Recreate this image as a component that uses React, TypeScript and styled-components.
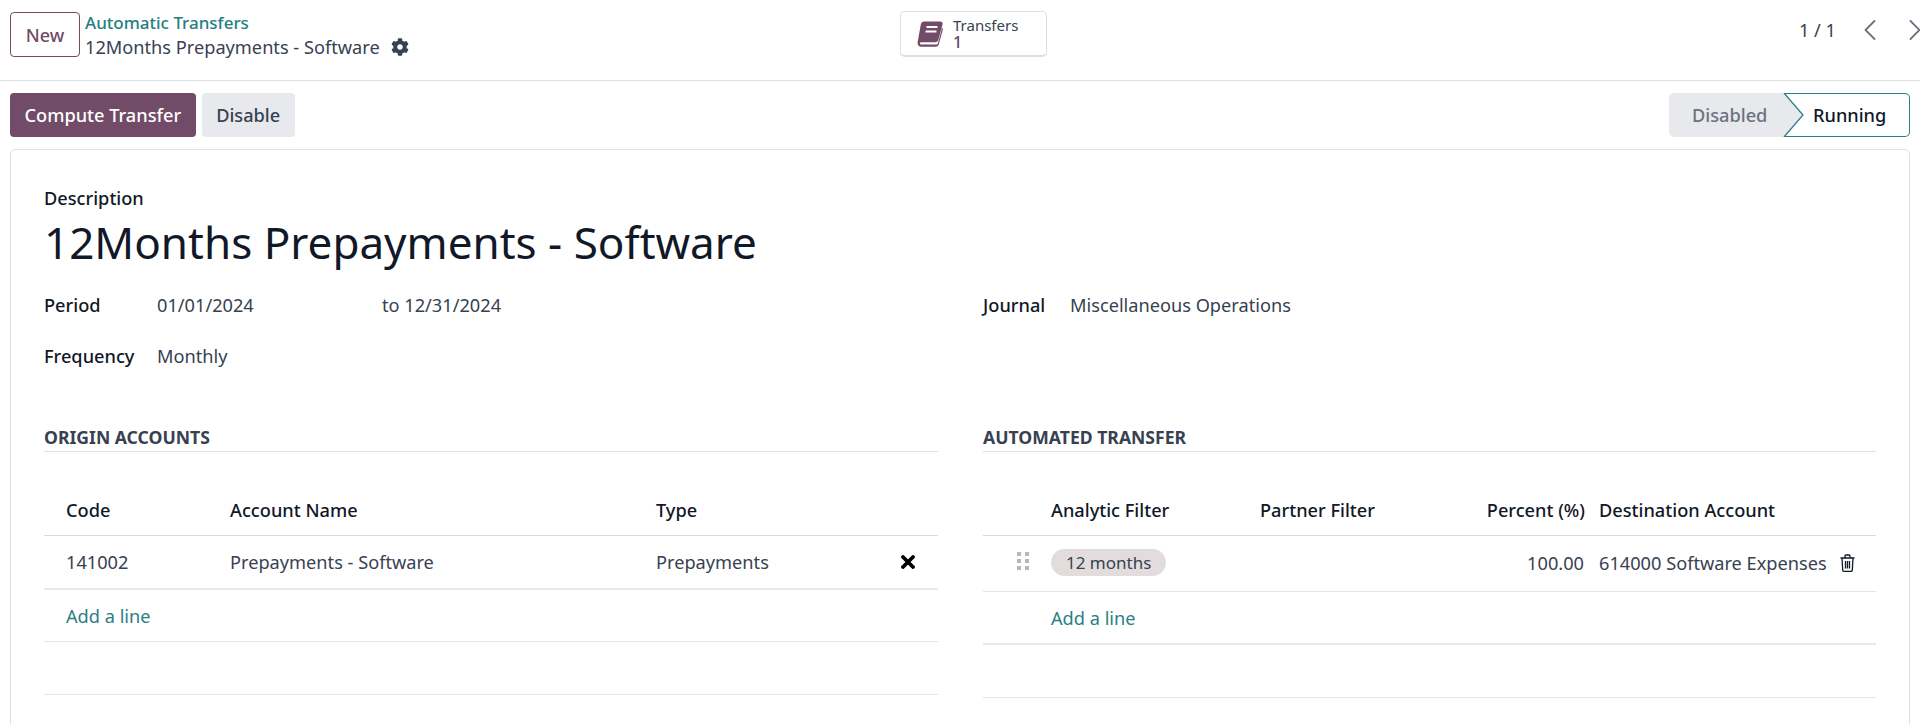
import * as React from 'react'
import styled, { createGlobalStyle } from 'styled-components'
import { FaCog } from 'react-icons/fa'
import { FiChevronLeft, FiChevronRight } from 'react-icons/fi'

const GlobalStyle = createGlobalStyle`
	html, body {
		margin: 0;
		height: 724px;
		overflow: hidden;
		background: #fff;
		font-family: "Noto Sans", "Open Sans", sans-serif;
		font-size: 18.2px;
		color: #374151;
	}
	* {
		box-sizing: border-box;
	}
`

const BookIcon = () => (
	<svg width="26" height="26" viewBox="0 0 26 26">
		<path
			d="M7.5 .5H23c2 0 3 1.2 2.5 3.2L21.4 18.6c-.5 1.8-1.5 2.6-3.2 2.6H4.6c-1.2 0-1.8.6-1.7 1.3.1.6.7 1 1.6 1h14.7c.9 0 1.4-.4 1.7-1.3L25.2 6.5c.5.5.8 1.2.6 2.2l-3.9 14.4c-.5 1.8-1.6 2.6-3.2 2.6H4.2C1.8 25.7 .3 24 .6 21.5L3.8 3.6C4.2 1.5 5.5 .5 7.5 .5Z"
			fill="#714b67"
		/>
		<path d="M9.5 6h11M8.5 10.5h11" stroke="#fff" strokeWidth="2.2" />
	</svg>
)

const CloseIcon = () => (
	<svg width="14" height="14" viewBox="0 0 14 14" stroke="#000" strokeWidth="3.8" strokeLinecap="round">
		<path d="M2 2l10 10M12 2L2 12" />
	</svg>
)

const TrashIcon = () => (
	<svg width="15" height="18" viewBox="0 0 15 18" fill="none" stroke="#111827" strokeWidth="1.3">
		<path d="M.5 4h14M2 4l.7 12.2c0 .6.5 1.1 1.1 1.1h7.4c.6 0 1.1-.5 1.1-1.1L13 4M5 4V2c0-.6.4-1 1-1h3c.6 0 1 .4 1 1v2M5.5 7v7.5M7.5 7v7.500M9.500 7v7.500" />
	</svg>
)

const DragHandle = () => (
	<svg width="12" height="18" viewBox="0 0 12 18" fill="#b4b7bd">
		<rect x="0" y="0" width="4" height="4" />
		<rect x="8" y="0" width="4" height="4" />
		<rect x="0" y="7" width="4" height="4" />
		<rect x="8" y="7" width="4" height="4" />
		<rect x="0" y="14" width="4" height="4" />
		<rect x="8" y="14" width="4" height="4" />
	</svg>
)

const App: React.FC = () => {
	return (
		<Page>
			<GlobalStyle />

			{/* Top bar */}
			<TopBar>
				<TopLeft>
					<NewButton>New</NewButton>
					<Breadcrumb>
						<BreadcrumbLink>Automatic Transfers</BreadcrumbLink>
						<BreadcrumbCurrent>
							12Months Prepayments - Software
							<FaCog size={18} color="#374151" />
						</BreadcrumbCurrent>
					</Breadcrumb>
				</TopLeft>

				<StatButton>
					<BookIcon />
					<StatText>
						<span>Transfers</span>
						<StatValue>1</StatValue>
					</StatText>
				</StatButton>

				<Pager>
					<PagerCount>1 / 1</PagerCount>
					<FiChevronLeft size={36} color="#6b7280" strokeWidth={1.2} />
					<FiChevronRight size={36} color="#6b7280" strokeWidth={1.2} />
				</Pager>
			</TopBar>

			{/* Action bar */}
			<ActionBar>
				<Actions>
					<ActionButton $primary>Compute Transfer</ActionButton>
					<ActionButton>Disable</ActionButton>
				</Actions>
				<StatusBar>
					<StatusDisabled>Disabled</StatusDisabled>
					<StatusRunning>
						<svg width="30" height="44" viewBox="0 0 30 44">
							<path d="M0 0H1L20 22L1 44H0Z" fill="#e7e9ed" />
							<path d="M1 0L20 22L1 44" fill="none" stroke="#2d7f86" strokeWidth="1.3" />
						</svg>
						<span>Running</span>
					</StatusRunning>
				</StatusBar>
			</ActionBar>

			{/* Form sheet */}
			<Sheet>
				<FieldLabel>Description</FieldLabel>
				<Title>12Months Prepayments - Software</Title>

				<InfoGrid>
					<InfoColumn>
						<InfoRow>
							<InfoLabel>Period</InfoLabel>
							<PeriodFrom>01/01/2024</PeriodFrom>
							<span>to 12/31/2024</span>
						</InfoRow>
						<InfoRow>
							<InfoLabel>Frequency</InfoLabel>
							<span>Monthly</span>
						</InfoRow>
					</InfoColumn>
					<InfoColumn>
						<InfoRow>
							<InfoLabel $narrow>Journal</InfoLabel>
							<span>Miscellaneous Operations</span>
						</InfoRow>
					</InfoColumn>
				</InfoGrid>

				<Columns>
					<section>
						<SectionTitle>ORIGIN ACCOUNTS</SectionTitle>
						<Table>
							<thead>
								<tr>
									<Th $width={186} $pad={22}>Code</Th>
									<Th $width={426}>Account Name</Th>
									<Th>Type</Th>
									<Th $width={44} />
								</tr>
							</thead>
							<tbody>
								<Row $thick $height={54}>
									<Td $pad={22}>141002</Td>
									<Td>Prepayments - Software</Td>
									<Td>Prepayments</Td>
									<Td $pad={7}><CloseIcon /></Td>
								</Row>
								<Row $height={52}>
									<Td $pad={22} colSpan={4}><AddLine>Add a line</AddLine></Td>
								</Row>
								<Row $height={53}><Td colSpan={4} /></Row>
							</tbody>
						</Table>
					</section>

					<section>
						<SectionTitle>AUTOMATED TRANSFER</SectionTitle>
						<Table>
							<thead>
								<tr>
									<Th $width={68} />
									<Th $width={209}>Analytic Filter</Th>
									<Th $width={210}>Partner Filter</Th>
									<Th $width={115} $right>Percent (%)</Th>
									<Th $pad={14}>Destination Account</Th>
								</tr>
							</thead>
							<tbody>
								<Row $flush $height={56}>
									<Td $pad={34}><DragHandle /></Td>
									<Td><Tag>12 months</Tag></Td>
									<Td />
									<Td $right>100.00</Td>
									<Td $pad={14}>
										<AccountCell>
											614000 Software Expenses
											<TrashIcon />
										</AccountCell>
									</Td>
								</Row>
								<Row $thick $height={53}>
									<Td />
									<Td colSpan={4}><AddLine>Add a line</AddLine></Td>
								</Row>
								<Row $height={53}><Td colSpan={5} /></Row>
							</tbody>
						</Table>
					</section>
				</Columns>
			</Sheet>
		</Page>
	)
}

export default App

const Page = styled.div`
	width: 1920px;
	height: 724px;
	overflow: hidden;
`

const TopBar = styled.div`
	display: grid;
	grid-template-columns: 1fr auto 1fr;
	align-items: flex-start;
	height: 81px;
	padding: 11px 0 0 10px;
	border-bottom: 1px solid #dee0e5;
`

const TopLeft = styled.div`
	display: flex;
	gap: 5px;
`

const NewButton = styled.button`
	width: 70px;
	height: 45px;
	margin-top: 1px;
	background: #fff;
	border: 1px solid #714b67;
	border-radius: 4px;
	color: #714b67;
	font: 500 18px "Noto Sans", sans-serif;
`

const Breadcrumb = styled.div`
	display: flex;
	flex-direction: column;
	line-height: 24px;
`

const BreadcrumbLink = styled.span`
	color: #23807f;
	font-weight: 500;
	font-size: 17px;
`

const BreadcrumbCurrent = styled.span`
	display: flex;
	align-items: center;
	gap: 11px;
`

const StatButton = styled.div`
	display: flex;
	align-items: center;
	gap: 10px;
	width: 147px;
	height: 46px;
	margin-left: 17px;
	padding-left: 16px;
	border: 1px solid #dcdee3;
	border-bottom-width: 2px;
	border-radius: 5px;
`

const StatText = styled.div`
	display: flex;
	flex-direction: column;
	font-size: 15px;
	line-height: 17px;
`

const StatValue = styled.span`
	color: #5b4a63;
	font-size: 16px;
	font-weight: 500;
`

const Pager = styled.div`
	display: flex;
	align-items: center;
	justify-content: flex-end;
	gap: 9px;
	height: 38px;
	margin-right: -13px;
`

const PagerCount = styled.span`
	margin-right: 7px;
	color: #374151;
`

const ActionBar = styled.div`
	display: flex;
	justify-content: space-between;
	padding: 12px 10px 12px;
`

const Actions = styled.div`
	display: flex;
	gap: 6px;
`

const ActionButton = styled.button<{ $primary?: boolean }>`
	height: 44px;
	padding: 0 14.5px;
	border: none;
	border-radius: 4px;
	background: ${(p) => (p.$primary ? '#714b67' : '#e7e9ed')};
	color: ${(p) => (p.$primary ? '#fff' : '#374151')};
	font: 500 18.2px "Noto Sans", sans-serif;
`

const StatusBar = styled.div`
	display: flex;
	height: 44px;
	line-height: 44px;
	font-weight: 500;
`

const StatusDisabled = styled.div`
	width: 115px;
	padding-left: 23px;
	background: #e7e9ed;
	border-radius: 5px 0 0 5px;
	color: #6b7280;
`

const StatusRunning = styled.div`
	display: flex;
	width: 126px;
	border: 1px solid #2d7f86;
	border-left: none;
	border-radius: 0 5px 5px 0;
	color: #111827;
	svg {
		margin: -1px 0 0 -1px;
		flex: none;
	}
	span {
		line-height: 42px;
	}
`

const Sheet = styled.div`
	margin: 0 10px;
	height: 600px;
	padding: 36px 33px 0;
	border: 1px solid #dee0e5;
	border-radius: 5px;
`

const FieldLabel = styled.div`
	color: #111827;
	font-weight: 500;
	line-height: 24px;
`

const Title = styled.div`
	margin-top: 2px;
	color: #111827;
	font-size: 44px;
	line-height: 60px;
`

const InfoGrid = styled.div`
	display: grid;
	grid-template-columns: 894px 893px;
	gap: 45px;
	margin-top: 21px;
`

const InfoColumn = styled.div`
	display: flex;
	flex-direction: column;
	gap: 26px;
`

const InfoRow = styled.div`
	display: flex;
	line-height: 25px;
`

const InfoLabel = styled.span<{ $narrow?: boolean }>`
	width: ${(p) => (p.$narrow ? 87 : 113)}px;
	color: #111827;
	font-weight: 500;
`

const PeriodFrom = styled.span`
	width: 225px;
`

const Columns = styled.div`
	display: grid;
	grid-template-columns: 894px 893px;
	gap: 45px;
	margin-top: 59px;
`

const SectionTitle = styled.div`
	height: 24px;
	border-bottom: 1px solid #dee0e5;
	color: #374151;
	font-size: 17.6px;
	font-weight: 700;
	line-height: 19px;
`

const Table = styled.table`
	width: 100%;
	margin-top: 29px;
	border-collapse: collapse;
	table-layout: fixed;
`

const Th = styled.th<{ $width?: number; $pad?: number; $right?: boolean }>`
	width: ${(p) => (p.$width ? `${p.$width}px` : 'auto')};
	height: 54px;
	padding: 5px 0 0 ${(p) => p.$pad ?? 0}px;
	border-bottom: 1px solid #d8dadd;
	color: #111827;
	font-weight: 500;
	text-align: ${(p) => (p.$right ? 'right' : 'left')};
`

const Td = styled.td<{ $pad?: number; $right?: boolean }>`
	padding-left: ${(p) => p.$pad ?? 0}px;
	text-align: ${(p) => (p.$right ? 'right' : 'left')};
	vertical-align: middle;
`

const Row = styled.tr<{ $thick?: boolean; $flush?: boolean; $height: number }>`
	height: ${(p) => p.$height}px;
	border-bottom: ${(p) => (p.$thick ? '2px solid #e7e9ed' : '1px solid #e3e5e9')};
	& > td {
		padding-top: ${(p) => (p.$flush ? 0 : 2)}px;
	}
`

const AddLine = styled.span`
	color: #2b8085;
`

const Tag = styled.span`
	display: inline-block;
	padding: 0 15px;
	border-radius: 14px;
	background: #e3dcdc;
	line-height: 27px;
	font-size: 17px;
`

const AccountCell = styled.div`
	display: flex;
	align-items: center;
	gap: 13px;
	white-space: nowrap;
`
